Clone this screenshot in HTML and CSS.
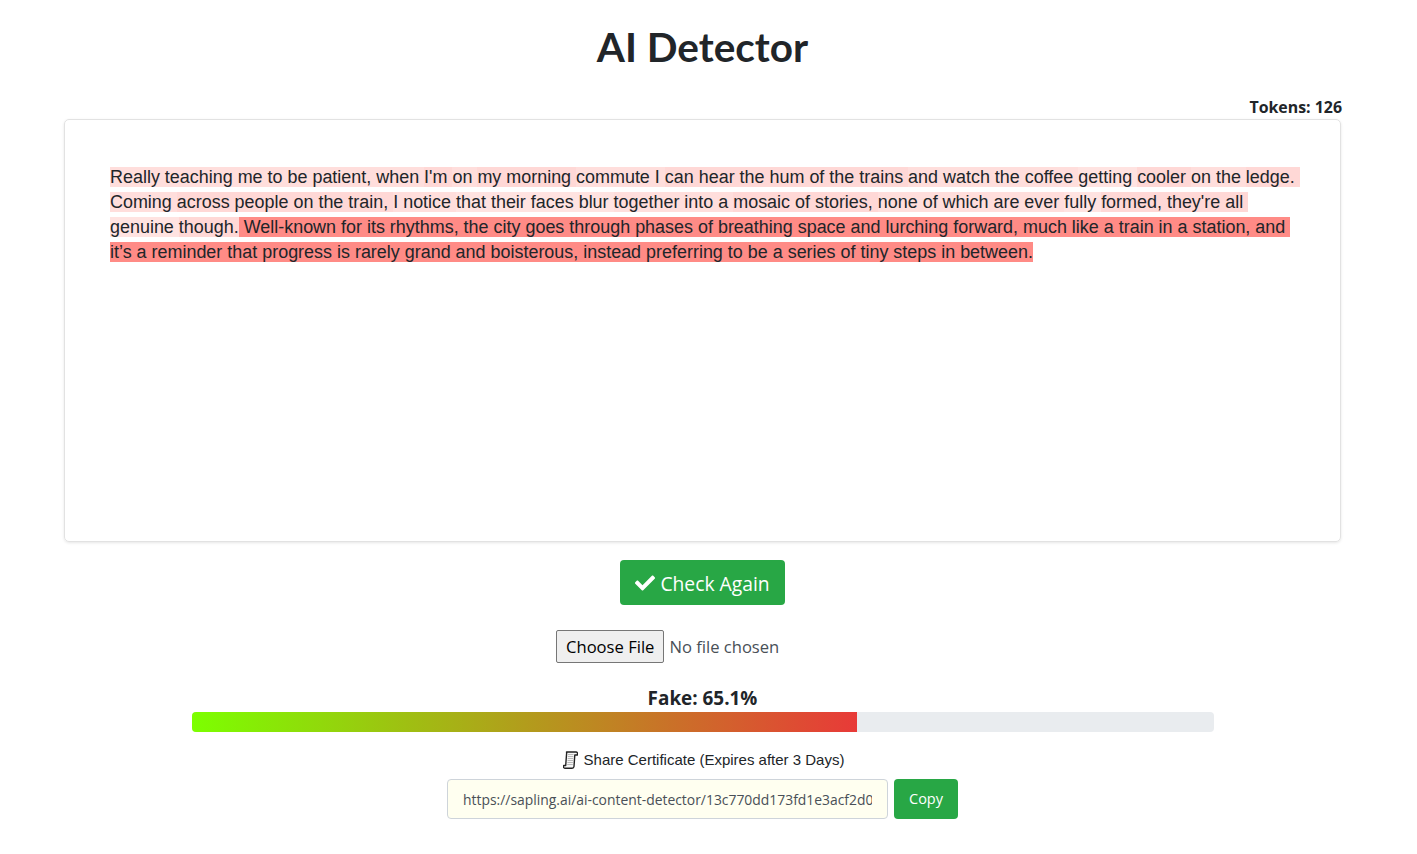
FILE: index.html
```html
<!DOCTYPE html>
<html lang="en">
<head>
<meta charset="utf-8">
<title>AI Detector</title>
<link rel="stylesheet" href="styles.css">
</head>
<body>
<main class="page">
  <h1 class="title">AI Detector</h1>
  <div class="tokens">Tokens: 126</div>
  <section class="editor">
    <p class="passage"><span class="a">Really teaching me to be patient, when </span><span class="b">I'm </span><span class="a">on </span><span class="b">my morning </span><span class="a">commute I </span><span class="b">can hear the hum of the trains </span><span class="a">and watch the coffee </span><span class="c">getting </span><span class="b">cooler </span><span class="a">on the </span><span class="b">ledge. </span><span class="a">Coming </span><span class="b">across people on the train, </span><span class="a">I notice </span><span class="c">that their faces blur </span><span class="a">together into a </span><span class="b">mosaic of stories, </span><span class="a">none of which are ever </span><span class="c">fully </span><span class="b">formed, they're all </span><span class="c">genuine </span><span class="b">though.</span><span class="hi"> Well-known for its rhythms, the city goes through phases of breathing space and lurching forward, much like a train in a station, and it’s a reminder that progress is rarely grand and boisterous, instead preferring to be a series of tiny steps in between.</span></p>
  </section>
  <div class="action">
    <button class="check" type="button">
      <svg class="check-icon" viewBox="0 0 512 512" aria-hidden="true"><path d="M173.898 439.404l-166.4-166.4c-9.997-9.997-9.997-26.206 0-36.204l36.203-36.204c9.997-9.998 26.207-9.998 36.204 0L192 312.69 432.095 72.596c9.997-9.997 26.207-9.997 36.204 0l36.203 36.204c9.997 9.997 9.997 26.206 0 36.204l-294.4 294.401c-9.998 9.997-26.207 9.997-36.204-.001z"/></svg>
      <span>Check Again</span>
    </button>
  </div>
  <div class="upload"><input class="file" type="file"></div>
  <div class="score">Fake: 65.1%</div>
  <div class="meter"><div class="meter-fill"></div></div>
  <div class="share">
    <svg class="scroll" viewBox="0 0 15 18" aria-hidden="true">
      <path class="scroll-body" d="M3.500 1h9.500c1.200 0 1.700 .9 1.500 2l-.2 1h-2.500L11 15.500c-.1 1-.8 1.700-1.900 1.700H1.800c-1 0-1.500-.8-1.300-1.700l.2-1h2L3.600 2.500C3.700 1.800 3.700 1.300 3.500 1z"/>
      <path class="scroll-lines" d="M5 3.500h5.500M4.900 5.500h5.500M4.700 7.500h5.500M4.500 9.500h5.500M4.400 11.500h5.500M4.200 13.500h5.500"/>
    </svg>
    <span>Share Certificate (Expires after 3 Days)</span>
  </div>
  <div class="link-row">
    <input class="link" type="text" readonly value="https://sapling.ai/ai-content-detector/13c770dd173fd1e3acf2d0b8">
    <button class="copy" type="button">Copy</button>
  </div>
</main>
</body>
</html>
```
FILE: styles.css
```css
* { box-sizing: border-box; }
html, body { margin: 0; background: #fff; }
body { color: #212529; font-family: "Open Sans", "Noto Sans", sans-serif; overflow: hidden; }
.page { width: 1405px; padding: 0 64px; display: flex; flex-direction: column; }
.title { margin: 0; padding-top: 23px; height: 97px; text-align: center; font: 700 40.5px/48px Lato, sans-serif; color: #212529; }
.tokens { height: 22px; margin-right: -1px; text-align: right; font: 700 15.9px/20px "Open Sans", sans-serif; }
.editor { height: 423px; border: 1px solid #e2e2e2; border-radius: 5px; box-shadow: 0 1px 3px rgba(0,0,0,.1); padding: 45px 44px 45px 45px; }
.passage { margin: 0; font: 17.94px/25px "Liberation Sans", Arial, sans-serif; color: #212529; white-space: pre-wrap; }
.a { background: #ffdedc; }
.b { background: #ffd8d6; }
.c { background: #ffe3e1; }
.hi { background: #ff8b86; }
.action { display: flex; justify-content: center; margin-top: 18px; }
.check { display: inline-flex; align-items: center; gap: 5px; height: 45px; width: 165px; justify-content: center; padding: 0; border: 0; border-radius: 4px; background: #28a745; color: #fff; font: 400 19.3px/30px "Open Sans", sans-serif; }
.check span { position: relative; top: 1px; }
.check-icon { width: 20px; height: 20px; fill: #fff; }
.upload { margin-top: 25px; height: 33px; margin-left: 492px; }
.file { font: 16.6px/27px "Open Sans", sans-serif; color: #495057; }
.file::file-selector-button { height: 33px; padding: 0 9px; margin-right: 5px; font: inherit; color: #000; background: #efefef; border: 1px solid #767676; border-radius: 2px; }
.score { margin-top: 23px; height: 26px; text-align: center; font: 700 18.9px/24px "Open Sans", sans-serif; }
.meter { width: 1022px; height: 20px; align-self: center; border-radius: 4px; background: #e9ecef; overflow: hidden; }
.meter-fill { width: 65.1%; height: 100%; background: linear-gradient(90deg, #7cff00, #e83a38); }
.share { display: flex; justify-content: center; align-items: center; gap: 6px; margin-top: 17px; height: 22px; padding-left: 2px; font: 15px/22px "Liberation Sans", Arial, sans-serif; }
.scroll { width: 15px; height: 18px; }
.scroll-body { fill: #f6f6f6; stroke: #222; stroke-width: 1.4; stroke-linejoin: round; }
.scroll-lines { fill: none; stroke: #aaa; stroke-width: .8; }
.link-row { display: flex; justify-content: center; gap: 6px; margin-top: 8px; }
.link { width: 441px; height: 40px; padding: 6px 15px; border: 1px solid #ced4da; border-radius: 4px; background: #fffff0; color: #495057; font: 13.9px/24px "Open Sans", sans-serif; outline: none; }
.copy { width: 64px; height: 40px; border: 0; border-radius: 4px; background: #28a745; color: #fff; font: 400 14.5px/24px "Open Sans", sans-serif; padding: 0; }
```
